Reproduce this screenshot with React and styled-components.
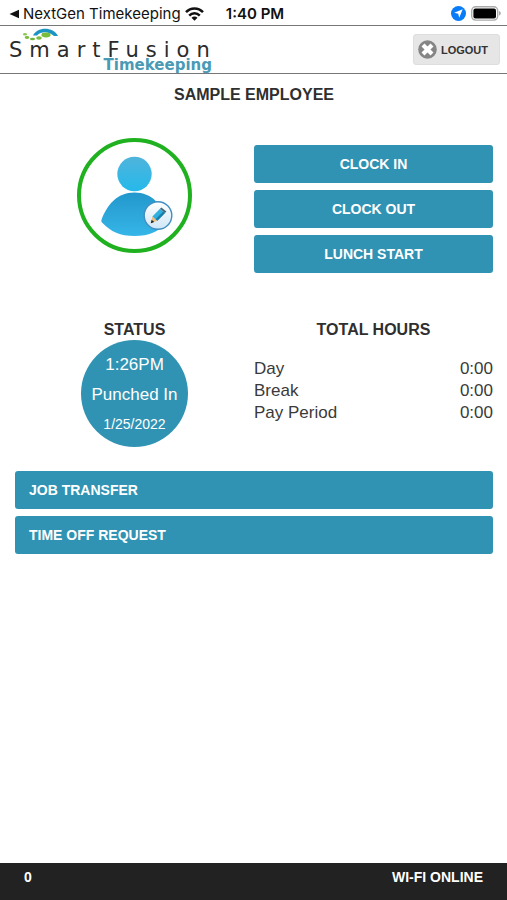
import React from "react";
import styled, { createGlobalStyle } from "styled-components";

const GlobalStyle = createGlobalStyle`
  * {
    box-sizing: border-box;
  }

  body {
    margin: 0;
    background: #fff;
    color: #3a3a3a;
    font-family: "Liberation Sans", Arial, sans-serif;
  }
`;

const Page = styled.div`
  display: flex;
  flex-direction: column;
  min-height: 100vh;
`;

const StatusBar = styled.div`
  display: grid;
  grid-template-columns: 1fr auto 1fr;
  align-items: center;
  height: 26px;
  padding: 2px 6px 0 9px;
  border-bottom: 1px solid #777;
  color: #111;
  font-family: Inter, sans-serif;
  font-size: 15px;
  line-height: 20px;
`;

const BackLink = styled.a`
  display: flex;
  align-items: center;
  gap: 4px;
  color: inherit;
  text-decoration: none;
  white-space: nowrap;
`;

const Clock = styled.span`
  font-weight: 600;
`;

const Indicators = styled.div`
  display: flex;
  justify-content: flex-end;
  align-items: center;
  gap: 5px;
`;

const Header = styled.header`
  display: flex;
  justify-content: space-between;
  align-items: center;
  height: 48px;
  padding: 0 7px 0 10px;
  border-bottom: 1px solid #777;
`;

const LogoutButton = styled.button`
  display: flex;
  align-items: center;
  gap: 4px;
  height: 31px;
  padding: 0 11px 0 4px;
  border: 1px solid #dedede;
  border-radius: 3px;
  background: #e6e6e6;
  color: #333;
  font-family: inherit;
  font-size: 11px;
  font-weight: bold;
`;

const Main = styled.main`
  flex: 1;
  padding: 11px 14px 20px 15px;
`;

const Heading = styled.h2`
  margin: 0;
  color: #2f2f2f;
  font-size: 16px;
  line-height: 20px;
  text-align: center;
`;

const Columns = styled.div`
  display: grid;
  grid-template-columns: 1fr 1fr;
  margin-top: ${(props) => props.$space}px;
`;

const AvatarButton = styled.button`
  justify-self: center;
  display: flex;
  justify-content: center;
  align-items: center;
  width: 115px;
  height: 115px;
  padding: 0;
  border: 4px solid #1fb11f;
  border-radius: 50%;
  background: #fff;
`;

const ButtonStack = styled.div`
  display: flex;
  flex-direction: column;
  gap: 7px;
  margin-top: ${(props) => props.$space}px;
`;

const ActionButton = styled.button`
  height: 38px;
  padding: 0 14px;
  border: 0;
  border-radius: 3px;
  background: #3093b3;
  color: #fff;
  font-family: inherit;
  font-size: 14px;
  font-weight: bold;
  text-align: ${(props) => props.$align || "center"};
`;

const StatusPanel = styled.section`
  display: flex;
  flex-direction: column;
  align-items: center;
`;

const StatusCircle = styled.div`
  display: flex;
  flex-direction: column;
  align-items: center;
  width: 107px;
  height: 107px;
  padding-top: 10px;
  border-radius: 50%;
  background: #3093b3;
  color: #fff;
  font-size: 17px;
  line-height: 30px;
`;

const StatusDate = styled.span`
  font-size: 14px;
  line-height: 28px;
`;

const HoursTable = styled.table`
  width: 100%;
  margin-top: 18px;
  border-collapse: collapse;
  font-size: 17px;
  line-height: 22px;

  th {
    padding: 0;
    font-weight: normal;
    text-align: left;
  }

  td {
    padding: 0;
    text-align: right;
  }
`;

const Footer = styled.footer`
  display: flex;
  justify-content: space-between;
  height: 37px;
  padding: 4px 24px 0;
  background: #222;
  color: #fff;
  font-size: 14px;
  font-weight: bold;
  line-height: 20px;
`;

const Logo = () => (
  <svg width="214" height="47" viewBox="0 0 214 47" role="img" aria-label="SmartFusion Timekeeping">
    <path d="M23 9.5 C27 0.5 43 0 48 10 L44 10 C39 5 31 5 27 9.5 Z" fill="#1b94c4" />
    <ellipse cx="36" cy="9" rx="4.6" ry="2.4" fill="#79bd3a" />
    <ellipse cx="29" cy="12" rx="2.8" ry="1.7" fill="#79bd3a" />
    <ellipse cx="22.5" cy="13" rx="2.5" ry="1.3" fill="#6bb536" />
    <ellipse cx="17" cy="11.5" rx="2.3" ry="1.4" fill="#79bd3a" />
    <ellipse cx="15" cy="8.3" rx="2" ry="1.2" fill="#8cc657" />
    <text x="-1" y="31" fill="#2b2b2b" fontFamily="DejaVu Sans, sans-serif" fontSize="21" letterSpacing="7">
      SmartFusion
    </text>
    <text x="202" y="44" fill="#4a9ab5" fontFamily="DejaVu Sans, sans-serif" fontSize="15" fontWeight="bold" textAnchor="end">
      Timekeeping
    </text>
  </svg>
);

const WifiIcon = () => (
  <svg width="19" height="14" viewBox="0 0 19 14" aria-hidden="true">
    <g fill="none" stroke="#111" strokeWidth="2.5">
      <path d="M1 5.2 C5.8 0.2 13.2 0.2 18 5.2" />
      <path d="M4.2 8.6 C7.2 5.6 11.8 5.6 14.8 8.6" />
    </g>
    <path d="M6.5 10.8 C8.2 9.2 10.8 9.2 12.5 10.8 L9.5 13.8 Z" fill="#111" />
  </svg>
);

const LocationIcon = () => (
  <svg width="15" height="15" viewBox="0 0 15 15" aria-hidden="true">
    <circle cx="7.5" cy="7.5" r="7.5" fill="#087bf8" />
    <path d="M11.7 3.3 L8.2 11.8 L7.2 7.8 L3.2 6.8 Z" fill="#fff" />
  </svg>
);

const BatteryIcon = () => (
  <svg width="30" height="15" viewBox="0 0 30 15" aria-hidden="true">
    <rect x="0.7" y="0.7" width="26" height="13.4" rx="4" fill="#fff" stroke="#aaa" strokeWidth="1.4" />
    <rect x="2.4" y="2.4" width="22.6" height="10" rx="2" fill="#000" />
    <path d="M28 5 C30.4 5.8 30.4 8.8 28 9.6 Z" fill="#aaa" />
  </svg>
);

const CloseIcon = () => (
  <svg width="19" height="19" viewBox="0 0 19 19" aria-hidden="true">
    <circle cx="9.5" cy="9.5" r="9.3" fill="#858585" />
    <path d="M5 5 L14 14 M14 5 L5 14" stroke="#fff" strokeWidth="4.2" />
  </svg>
);

const PersonIcon = () => (
  <svg width="107" height="107" viewBox="0 0 107 107" aria-hidden="true">
    <defs>
      <linearGradient id="head" x1="0" y1="0" x2="0" y2="1">
        <stop offset="0" stopColor="#4fb4dc" />
        <stop offset="1" stopColor="#25b9ea" />
      </linearGradient>
      <linearGradient id="torso" x1="0" y1="0" x2="0" y2="1">
        <stop offset="0" stopColor="#2298cc" />
        <stop offset="0.6" stopColor="#2fa9dc" />
        <stop offset="1" stopColor="#35b6e8" />
      </linearGradient>
      <linearGradient id="badge" x1="0" y1="0" x2="0" y2="1">
        <stop offset="0" stopColor="#fff" />
        <stop offset="1" stopColor="#cfe6f6" />
      </linearGradient>
    </defs>
    <circle cx="53.5" cy="32" r="17.2" fill="url(#head)" />
    <path
      d="M20.4 78 C26 63 36 50.5 53.5 50.5 C71 50.5 81 63 86.6 78 Q87 79.5 86 80.5 C77 90 68 94 53.5 94 C39 94 30 90 21 80.5 Q20 79.5 20.4 78 Z"
      fill="url(#torso)"
    />
    <circle cx="77" cy="73.5" r="13.8" fill="url(#badge)" stroke="#418fc2" strokeWidth="1.4" />
    <path d="M69.8 81.2 L71.4 74.6 L76.4 78.8 Z" fill="#e9bd82" />
    <path d="M69.8 81.2 L70.6 77.8 L73.2 79.9 Z" fill="#222" />
    <path d="M71.4 74.6 L79 66.8 L84 71 L76.4 78.8 Z" fill="#2fb0de" />
    <path d="M74.6 77.3 L82.2 69.5 L84 71 L76.4 78.8 Z" fill="#1b7dab" />
    <path d="M79 66.8 L80.4 65.4 L85.4 69.6 L84 71 Z" fill="#4a6473" />
  </svg>
);

const punchActions = ["CLOCK IN", "CLOCK OUT", "LUNCH START"];
const requestActions = ["JOB TRANSFER", "TIME OFF REQUEST"];

const hours = [
  { label: "Day", value: "0:00" },
  { label: "Break", value: "0:00" },
  { label: "Pay Period", value: "0:00" },
];

export default function App() {
  return (
    <Page>
      <GlobalStyle />
      <StatusBar>
        <BackLink href="#">
          <svg width="10" height="10" viewBox="0 0 10 10" aria-hidden="true">
            <path d="M0.5 5 L10 0.8 V9.2 Z" fill="#111" />
          </svg>
          NextGen Timekeeping
          <WifiIcon />
        </BackLink>
        <Clock>1:40 PM</Clock>
        <Indicators>
          <LocationIcon />
          <BatteryIcon />
        </Indicators>
      </StatusBar>

      <Header>
        <Logo />
        <LogoutButton type="button">
          <CloseIcon />
          LOGOUT
        </LogoutButton>
      </Header>

      <Main>
        <Heading as="h1">SAMPLE EMPLOYEE</Heading>

        <Columns $space={33}>
          <AvatarButton type="button" aria-label="Edit photo">
            <PersonIcon />
          </AvatarButton>
          <ButtonStack $space={7}>
            {punchActions.map((action) => (
              <ActionButton type="button" key={action}>
                {action}
              </ActionButton>
            ))}
          </ButtonStack>
        </Columns>

        <Columns $space={47}>
          <StatusPanel>
            <Heading>STATUS</Heading>
            <StatusCircle>
              <span>1:26PM</span>
              <span>Punched In</span>
              <StatusDate>1/25/2022</StatusDate>
            </StatusCircle>
          </StatusPanel>
          <section>
            <Heading>TOTAL HOURS</Heading>
            <HoursTable>
              <tbody>
                {hours.map((row) => (
                  <tr key={row.label}>
                    <th scope="row">{row.label}</th>
                    <td>{row.value}</td>
                  </tr>
                ))}
              </tbody>
            </HoursTable>
          </section>
        </Columns>

        <ButtonStack $space={24}>
          {requestActions.map((action) => (
            <ActionButton type="button" key={action} $align="left">
              {action}
            </ActionButton>
          ))}
        </ButtonStack>
      </Main>

      <Footer>
        <span>0</span>
        <span>WI-FI ONLINE</span>
      </Footer>
    </Page>
  );
}
